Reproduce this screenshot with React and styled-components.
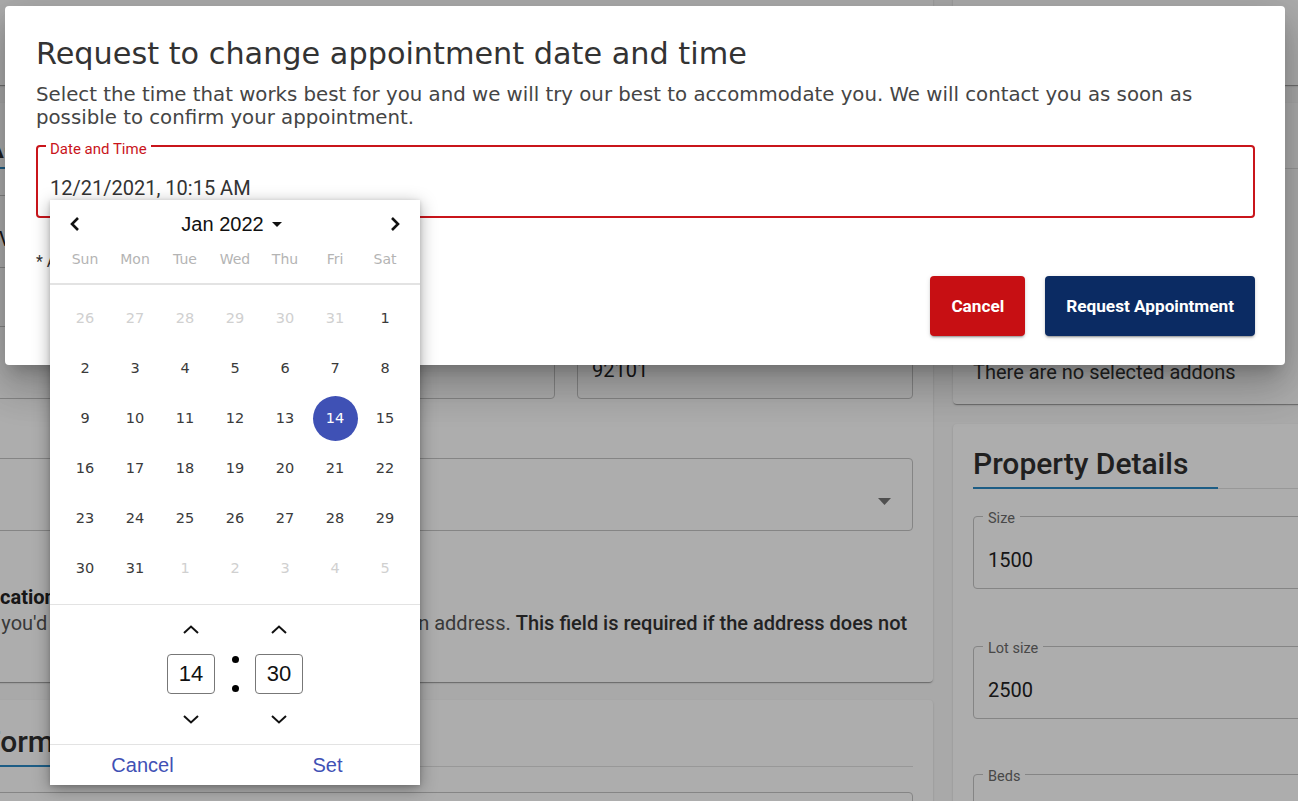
import React from "react";
import styled, { createGlobalStyle } from "styled-components";

const GlobalStyle = createGlobalStyle`
  html, body { margin: 0; padding: 0; }
  body {
    background: #fafafa;
    overflow: hidden;
    font-family: Roboto, "Liberation Sans", Arial, sans-serif;
  }
  * { box-sizing: border-box; }
`;

const Screen = styled.div`
  position: relative;
  width: 1298px;
  height: 801px;
  overflow: hidden;
  background: #fafafa;
`;

/* ---------- background page ---------- */

const Columns = styled.div`
  display: flex;
  align-items: flex-start;
  gap: 20px;
  margin: -40px 0 0 -36px;
`;

const Column = styled.div`
  flex: 0 0 ${(p) => p.$w}px;
  display: flex;
  flex-direction: column;
  gap: 18px;
`;

const Card = styled.section`
  background: #fff;
  border-radius: 4px;
  box-shadow: 0 2px 1px -1px rgba(0, 0, 0, 0.2), 0 1px 1px 0 rgba(0, 0, 0, 0.14),
    0 1px 3px 0 rgba(0, 0, 0, 0.12);
  height: ${(p) => p.$h}px;
  margin-top: ${(p) => p.$mt || 0}px;
  padding: 20px;
  overflow: hidden;
`;

const SectionHead = styled.div`
  display: flex;
  border-bottom: 1px solid #e0e0e0;
`;

const SectionTitle = styled.h2`
  margin: 0 0 -1px;
  padding: ${(p) => p.$pt}px 30px ${(p) => p.$pb}px 0;
  font: 500 30px/36px Roboto, "Liberation Sans", sans-serif;
  color: #303030;
  border-bottom: 2px solid #2b8ac4;
  white-space: nowrap;
`;

const Outlined = styled.div`
  position: relative;
  height: 73px;
  margin-top: ${(p) => p.$mt || 0}px;
  border: 1px solid #c4c4c4;
  border-radius: 4px;
  padding: 14px 21px 0 14px;
  display: flex;
  align-items: center;
  font-size: 20px;
  color: #222;
  white-space: nowrap;
`;

const FieldLabel = styled.span`
  position: absolute;
  top: -6px;
  left: 9px;
  padding: 0 5px;
  background: #fff;
  font-size: 14.5px;
  line-height: 16px;
  color: #6b6b6b;
`;

const FieldRow = styled.div`
  display: grid;
  grid-template-columns: 1fr 336px;
  gap: 22px;
  margin-top: ${(p) => p.$mt}px;
`;

const DropCaret = styled.svg`
  margin-left: auto;
  flex: none;
`;

const InfoLabel = styled.div`
  margin: 55px 0 0 -6px;
  font: 700 20px/22px Roboto, sans-serif;
  color: #222;
`;

const InfoText = styled.div`
  margin-top: 3px;
  font: 400 20px/24px Roboto, sans-serif;
  color: #555;
  white-space: nowrap;
  strong {
    font-weight: 500;
    color: #333;
  }
`;

const Plain = styled.div`
  margin-top: ${(p) => p.$mt}px;
  font: 400 20px/24px Roboto, sans-serif;
  color: #333;
`;

/* ---------- overlay / dialog ---------- */

const Backdrop = styled.div`
  position: absolute;
  inset: 0;
  background: rgba(0, 0, 0, 0.32);
`;

const Dialog = styled.div`
  position: absolute;
  left: 5px;
  top: 6px;
  width: 1280px;
  height: 359px;
  background: #fff;
  border-radius: 4px;
  padding: 30px 30px 0 31px;
  box-shadow: 0 11px 15px -7px rgba(0, 0, 0, 0.2), 0 24px 38px 3px rgba(0, 0, 0, 0.14),
    0 9px 46px 8px rgba(0, 0, 0, 0.12);
`;

const Title = styled.h1`
  margin: 0;
  font: 400 30.3px/36px "DejaVu Sans", sans-serif;
  color: #333;
`;

const Lead = styled.p`
  margin: 11px 0 0;
  font: 400 19.75px/23px "DejaVu Sans", sans-serif;
  color: #454545;
`;

const DateField = styled.div`
  position: relative;
  margin-top: 16px;
  height: 73px;
  border: 2px solid #c9151b;
  border-radius: 4px;
  padding: 13px 12px 0;
  display: flex;
  align-items: center;
  font: 400 20px Roboto, sans-serif;
  color: #333;
`;

const DateLabel = styled.span`
  position: absolute;
  top: -6px;
  left: 8px;
  padding: 0 4px;
  background: #fff;
  font: 400 15px/16px Roboto, sans-serif;
  color: #c9151b;
`;

const Note = styled.div`
  margin-top: 34px;
  font: 400 16px/20px Roboto, sans-serif;
  color: #333;
`;

const Actions = styled.div`
  margin-top: 4px;
  display: flex;
  justify-content: flex-end;
  gap: 20px;
`;

const ActionButton = styled.button`
  height: 60px;
  padding: 0 21px;
  border: none;
  border-radius: 4px;
  background: ${(p) => p.$bg};
  color: #fff;
  font: 700 17.2px Roboto, sans-serif;
  box-shadow: 0 3px 1px -2px rgba(0, 0, 0, 0.2), 0 2px 2px 0 rgba(0, 0, 0, 0.14),
    0 1px 5px 0 rgba(0, 0, 0, 0.12);
`;

/* ---------- date/time picker popup ---------- */

const Picker = styled.div`
  position: absolute;
  left: 50px;
  top: 200px;
  width: 370px;
  height: 585px;
  background: #fff;
  box-shadow: 0 4px 16px rgba(0, 0, 0, 0.35), 0 1px 4px rgba(0, 0, 0, 0.15);
  display: flex;
  flex-direction: column;
`;

const PickerHead = styled.div`
  height: 48px;
  padding: 0 20px;
  display: flex;
  align-items: center;
  justify-content: space-between;
`;

const MonthLabel = styled.div`
  display: flex;
  align-items: center;
  gap: 8px;
  padding-right: 7px;
  font: 400 20px "Liberation Sans", Arial, sans-serif;
  color: #111;
`;

const IconButton = styled.span`
  width: 10px;
  display: flex;
  justify-content: center;
`;

const WeekRow = styled.div`
  display: grid;
  grid-template-columns: repeat(7, 50px);
  padding: 0 10px 13px;
  border-bottom: 2px solid #e3e3e3;
`;

const WeekDay = styled.div`
  text-align: center;
  font: 400 14px/22px "DejaVu Sans", sans-serif;
  color: #b4b4b4;
`;

const DaysGrid = styled.div`
  display: grid;
  grid-template-columns: repeat(7, 50px);
  grid-auto-rows: 50px;
  padding: 8px 10px 11px;
  border-bottom: 1px solid #e3e3e3;
`;

const Day = styled.div`
  display: flex;
  align-items: center;
  justify-content: center;
  font: 400 14.5px "DejaVu Sans", sans-serif;
  color: ${(p) => (p.$out ? "#d0d0d0" : "#3a3a3a")};
`;

const Selected = styled.span`
  width: 45px;
  height: 45px;
  border-radius: 50%;
  background: #3f51b5;
  color: #fff;
  display: flex;
  align-items: center;
  justify-content: center;
`;

const TimeSection = styled.div`
  height: 140px;
  padding-top: 12px;
  display: flex;
  justify-content: center;
  border-bottom: 1px solid #e3e3e3;
`;

const TimeColumn = styled.div`
  width: 48px;
  display: flex;
  flex-direction: column;
  align-items: center;
  gap: 13px;
`;

const Stepper = styled.span`
  height: 24px;
  display: flex;
  align-items: center;
  justify-content: center;
`;

const TimeBox = styled.div`
  width: 48px;
  height: 40px;
  border: 1px solid #777;
  border-radius: 4px;
  display: flex;
  align-items: center;
  justify-content: center;
  font: 400 22px "Liberation Sans", Arial, sans-serif;
  color: #111;
`;

const Colon = styled.div`
  width: 40px;
  height: 40px;
  margin-top: 37px;
  padding: 2px 0;
  display: flex;
  flex-direction: column;
  align-items: center;
  justify-content: space-between;
`;

const Dot = styled.span`
  width: 7px;
  height: 7px;
  border-radius: 50%;
  background: #000;
`;

const PickerFoot = styled.div`
  flex: 1;
  display: flex;
`;

const FootButton = styled.button`
  flex: 1;
  border: none;
  background: none;
  font: 400 20px "Liberation Sans", Arial, sans-serif;
  color: #3f51b5;
  padding: 0;
`;

/* ---------- icons ---------- */

const Chevron = ({ dir }) => {
  const pts = {
    left: "8,1 2,7 8,13",
    right: "2,1 8,7 2,13",
  }[dir];
  return (
    <svg width="10" height="14" viewBox="0 0 10 14">
      <polyline points={pts} fill="none" stroke="#111" strokeWidth="2.6" />
    </svg>
  );
};

const Caret = ({ color = "#111", w = 10, h = 5 }) => (
  <svg width={w} height={h} viewBox={`0 0 ${w} ${h}`}>
    <polygon points={`0,0 ${w},0 ${w / 2},${h}`} fill={color} />
  </svg>
);

const Arrow = ({ up }) => (
  <svg width="16" height="9" viewBox="0 0 16 9">
    <polyline
      points={up ? "1,8 8,1.5 15,8" : "1,1 8,7.5 15,1"}
      fill="none"
      stroke="#111"
      strokeWidth="2"
    />
  </svg>
);

const WEEK = ["Sun", "Mon", "Tue", "Wed", "Thu", "Fri", "Sat"];
const DAYS = [
  ...[26, 27, 28, 29, 30, 31].map((d) => ({ d, out: true })),
  ...Array.from({ length: 31 }, (_, i) => ({ d: i + 1 })),
  ...[1, 2, 3, 4, 5].map((d) => ({ d, out: true })),
];

export default function App() {
  return (
    <Screen>
      <GlobalStyle />
      <Columns>
        <Column $w={969}>
          <Card $h={125} />
          <Card $h={579}>
            <SectionHead>
              <SectionTitle $pt={7} $pb={1}>Address</SectionTitle>
            </SectionHead>
            <Outlined $mt={26}>Vista Way</Outlined>
            <FieldRow $mt={58}>
              <Outlined />
              <Outlined>
                <FieldLabel>Zip</FieldLabel>
                92101
              </Outlined>
            </FieldRow>
            <Outlined $mt={59}>
              <DropCaret width="13" height="7" viewBox="0 0 13 7">
                <polygon points="0,0 13,0 6.5,7" fill="#757575" />
              </DropCaret>
            </Outlined>
            <InfoLabel>Location</InfoLabel>
            <InfoText>
              If you'd like, add more detail about it than the main address.{" "}
              <strong>This field is required if the address does not</strong>
            </InfoText>
          </Card>
          <Card $h={200}>
            <SectionHead>
              <SectionTitle $pt={4} $pb={5}>Form</SectionTitle>
            </SectionHead>
            <Outlined $mt={25} />
          </Card>
        </Column>
        <Column $w={400}>
          <Card $h={125} />
          <Card $h={301}>
            <SectionHead>
              <SectionTitle $pt={7} $pb={1}>Addons</SectionTitle>
            </SectionHead>
            <Plain $mt={191}>There are no selected addons</Plain>
          </Card>
          <Card $h={420} $mt={2}>
            <SectionHead>
              <SectionTitle $pt={2} $pb={5}>Property Details</SectionTitle>
            </SectionHead>
            <Outlined $mt={27}>
              <FieldLabel>Size</FieldLabel>
              1500
            </Outlined>
            <Outlined $mt={57}>
              <FieldLabel>Lot size</FieldLabel>
              2500
            </Outlined>
            <Outlined $mt={55}>
              <FieldLabel>Beds</FieldLabel>3
            </Outlined>
          </Card>
        </Column>
      </Columns>

      <Backdrop />

      <Dialog>
        <Title>Request to change appointment date and time</Title>
        <Lead>
          Select the time that works best for you and we will try our best to accommodate
          you. We will contact you as soon as possible to confirm your appointment.
        </Lead>
        <DateField>
          <DateLabel>Date and Time</DateLabel>
          12/21/2021, 10:15 AM
        </DateField>
        <Note>* All requests are subject to availability</Note>
        <Actions>
          <ActionButton $bg="#c70f13">Cancel</ActionButton>
          <ActionButton $bg="#0b2b63">Request Appointment</ActionButton>
        </Actions>
      </Dialog>

      <Picker>
        <PickerHead>
          <IconButton>
            <Chevron dir="left" />
          </IconButton>
          <MonthLabel>
            Jan 2022
            <Caret w={10} h={5} />
          </MonthLabel>
          <IconButton>
            <Chevron dir="right" />
          </IconButton>
        </PickerHead>
        <WeekRow>
          {WEEK.map((w) => (
            <WeekDay key={w}>{w}</WeekDay>
          ))}
        </WeekRow>
        <DaysGrid>
          {DAYS.map((x, i) => (
            <Day key={i} $out={x.out}>
              {!x.out && x.d === 14 ? <Selected>14</Selected> : x.d}
            </Day>
          ))}
        </DaysGrid>
        <TimeSection>
          <TimeColumn>
            <Stepper>
              <Arrow up />
            </Stepper>
            <TimeBox>14</TimeBox>
            <Stepper>
              <Arrow />
            </Stepper>
          </TimeColumn>
          <Colon>
            <Dot />
            <Dot />
          </Colon>
          <TimeColumn>
            <Stepper>
              <Arrow up />
            </Stepper>
            <TimeBox>30</TimeBox>
            <Stepper>
              <Arrow />
            </Stepper>
          </TimeColumn>
        </TimeSection>
        <PickerFoot>
          <FootButton>Cancel</FootButton>
          <FootButton>Set</FootButton>
        </PickerFoot>
      </Picker>
    </Screen>
  );
}
